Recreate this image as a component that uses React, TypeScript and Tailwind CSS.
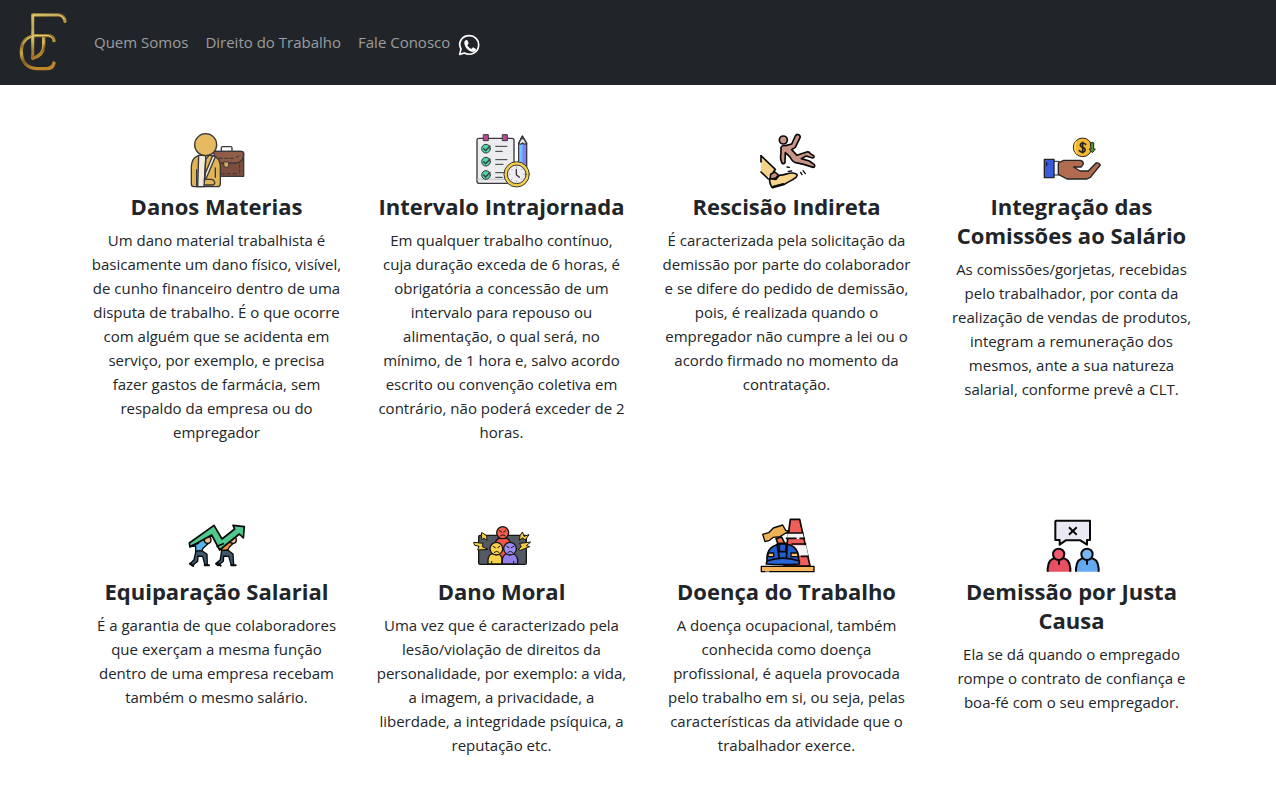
import type { ReactNode } from "react";

type Topic = { title: string; text: string; icon: ReactNode };

function Icon({ viewBox, children }: { viewBox: string; children: ReactNode }) {
  return (
    <svg
      viewBox={viewBox}
      className="size-16"
      fill="none"
      strokeLinecap="round"
      strokeLinejoin="round"
      aria-hidden="true"
    >
      {children}
    </svg>
  );
}

function InjuryIcon() {
  return (
    <Icon viewBox="10 5 192 192">
      <g stroke="#38383b" strokeWidth="4">
        <path d="M119 75V65q0-4 4-4h24q4 0 4 4v10" />
        <path d="M95 75h83q8 0 8 8v67H105V75z" fill="#7d4e3d" />
        <path d="M95 75h83q8 0 8 8c0 16-8 25-22 27h-60z" fill="#915d49" />
        <path d="M127 107h14v12q0 4-7 4t-7-4z" fill="#d9ac55" strokeWidth="3" />
        <path d="M112 96h10m6 0h10m6 0h12m8-3l8-4M118 142h10m8 0h10m8 0h10m10-3v-10m0-6v-8" strokeWidth="3" />
        <path d="M60 87c-22 0-31 16-31 38v48q0 8 8 8h70q9 0 9-9v-48c0-23-10-37-32-37z" fill="#dfb557" />
        <path d="M60 87h-9l-3 94h19l5-82 10-12z" fill="#f1eadf" />
        <path d="M93 88l8 4-26 61-7 10 3-22z" fill="#f1eadf" />
        <path d="M45 130v51M101 125v28M70 159h20q10 3 9 13l-5 4H68M72 88v15l-3 56" />
        <circle cx="72" cy="55" r="33" fill="#e5ba60" />
      </g>
    </Icon>
  );
}

function ScheduleIcon() {
  return (
    <Icon viewBox="10 6 192 192">
      <g stroke="#37373d" strokeWidth="4">
        <rect x="31" y="37" width="111" height="135" rx="6" fill="#ededf0" />
        <path d="M34 160h105" stroke="#cfcfd6" strokeWidth="5" />
        <path d="M51 26h14v18H51zM108 26h14v18h-14z" fill="#bd4795" strokeWidth="3" />
        <path d="M87 61h34M87 76h20m-20 25h34m-34 14h22m-22 25h24m-24 14h20" strokeWidth="3" />
        <g fill="#50d6a6" strokeWidth="3">
          <circle cx="58" cy="68" r="13" />
          <circle cx="58" cy="107" r="13" />
          <circle cx="58" cy="147" r="13" />
        </g>
        <path d="M51 68l6 6 13-14m-19 47l6 6 13-14m-19 48l6 6 13-14" />
        <path d="M156 52l11-22 13 22v90h-24z" fill="#8380ff" />
        <path d="M158 54h9v82h-9z" fill="#68c7fb" stroke="none" />
        <path d="M156 52l11-21 13 21q-6 5-12-1-6 6-12 1z" fill="#eeeae7" />
        <path d="M163 38l4-8 5 8z" fill="#37373d" strokeWidth="2" />
        <circle cx="150" cy="145" r="38" fill="#f4cf45" strokeWidth="3" />
        <circle cx="150" cy="145" r="28" fill="#eeeef2" strokeWidth="3" />
        <path d="M149 130v16l9 8" />
        <path d="M150 122v3m0 40v3m-23-23h3m40 0h3m-39-16l2 2m28 28l2 2m0-32l-2 2m-28 28l-2 2" strokeWidth="2" stroke="#85858a" />
      </g>
    </Icon>
  );
}

function KickIcon() {
  return (
    <Icon viewBox="13 6 192 192">
      <g stroke="#090909" strokeWidth="5">
        <circle cx="98" cy="42" r="12" fill="#c99586" />
        <path d="M91 64q4-7 14-5l18-5 11-24q4-7 10-4t4 9l-14 29-11 7 16 17 29-10q9-1 10 4l11 7q3 5-3 7l-20-6-14 8 24 7 15 11q3 6-3 8l-29-9-27-6q-6-2-15-17l-13-12-1 29q-3 7-9 2c-6-11-5-20-3-31z" fill="#c99586" />
        <path d="M31 89l43 41-24 26-19-18z" fill="#f5d489" stroke="none" />
        <path d="M31 89l43 41-6 8M31 138l22 21M31 90v18" />
        <path d="M60 145l13-7 10 9-7 9-18 4z" fill="#c88f7b" />
        <path d="M57 158l19 2 11-13c14 2 22-7 40-6 13 1 15 7 9 13-12 10-23 13-35 21l-36 10c-7-9-9-17-8-27z" fill="#f5d489" />
        <path d="M98 173l-31 8M109 123l7 1m-3 12l10-1M150 139l4 7m3-12l7 9" strokeWidth="4" />
      </g>
    </Icon>
  );
}

function CommissionIcon() {
  return (
    <Icon viewBox="11 6 192 192">
      <g stroke="#242424" strokeWidth="4">
        <circle cx="139" cy="64" r="28" fill="#f7b82d" strokeWidth="3" />
        <path d="M119 48q-9 19 3 34" stroke="#ffdb67" strokeWidth="4" />
        <path d="M163 50h9v19h5l-9 11-10-11h5z" fill="#509b34" strokeWidth="3" />
        <path d="M52 106h17v41H52z" fill="#f4f4fc" strokeWidth="3" />
        <path d="M66 111l16-8h51q9 3 8 11l-6 9h-23l19 12h25l23-24q10-2 13 6l-30 37-10 5H92l-26-14z" fill="#b16b4f" />
        <path d="M24 100h29v55H24z" fill="#395bdb" />
        <path d="M31 110v9" stroke="#101e5e" />
        <path d="M148 55q-6-6-13-3-6 5 0 10l8 4q7 6 0 11-8 4-14-3m10-25v31" strokeWidth="5" />
      </g>
    </Icon>
  );
}

function GrowthIcon() {
  return (
    <Icon viewBox="9 6 192 192">
      <g stroke="#090909" strokeWidth="4">
        <path d="M51 87l-28 19 18-1v17q6 7 16 1l6-11 15-14-4-12z" fill="#57b6ed" />
        <path d="M111 92l-6 15 14-2v13q6 7 17 1l6-11 13-12-4-12z" fill="#f49437" />
        <path d="M42 120l18-1 15 11 1 31-7 2-7-27-14-1-1 16-16 13-7-6 12-12z" fill="#3c5970" />
        <path d="M119 118l18-1 16 12 2 32-7 2-8-27-15-1-1 16-16 13-7-6 14-12z" fill="#3c5970" />
        <path d="M24 158l10 7m34-2h13m26-6l9 7m32-1h13" strokeWidth="6" />
        <circle cx="77" cy="87" r="10" fill="#f0b991" />
        <circle cx="153" cy="87" r="10" fill="#f0b991" />
        <path d="M22 96l74-53 24 41 38-30-5-11 34 4-3 34-12-12-59 48-24-45-65 36z" fill="#4ec98b" strokeWidth="5" />
        <path d="M25 106l24-9m58 8l17-7" strokeWidth="5" />
      </g>
    </Icon>
  );
}

function MoralIcon() {
  return (
    <Icon viewBox="10 6 192 192">
      <g stroke="#161616" strokeWidth="4">
        <rect x="36" y="73" width="143" height="87" rx="4" fill="#545a63" />
        <path d="M85 97q4-16 19-16h11q13 0 17 16v62H85z" fill="#ef5746" />
        <circle cx="108" cy="65" r="18" fill="#f15e4b" />
        <path d="M64 159v-13q2-18 17-18h7q17 0 18 18v13z" fill="#f8d149" />
        <path d="M107 159v-13q3-18 17-18h9q17 0 20 18v13z" fill="#9381e9" />
        <circle cx="89" cy="113" r="19" fill="#f8d149" />
        <circle cx="130" cy="113" r="19" fill="#9d8cf3" />
        <path d="M98 59l7 4m12-4l-6 4m-9 11q6-6 13 0M79 106l7 4m13-4l-6 4m-10 14q7-7 14 0M120 106l7 4m14-4l-7 4m-10 14q7-7 14 0M75 151v8m31-10v10m35-8v8" strokeWidth="3" />
        <path d="M46 65l14 9 1 14-9-6-5 4-3-10zM22 94l27 3-2 10 17 8-31 2 4-11-12-3zM168 64l4 12 15-5-11 16-8-6-10 7 2-14zM191 94l-12 10 10 3-27 11-8-2 10-9-5-9z" fill="#f9cc3e" strokeWidth="3" />
      </g>
    </Icon>
  );
}

function SafetyIcon() {
  return (
    <Icon viewBox="9 6 192 192">
      <g stroke="#080808" strokeWidth="5">
        <path d="M115 25h28l31 140H96z" fill="#ef5e59" />
        <path d="M107 66h45l4 18h-51zM108 103h54l7 31h-61z" fill="#f6f4f5" stroke="none" />
        <path d="M104 66h48M103 82h29m12 0h13M120 99h41M148 136h20" />
        <path d="M72 83l17-5 15 31-17 11z" fill="#ef7947" />
        <path d="M32 70l18-5 14-14 28-9 9 16 10 2-27 17-20 2-11 9-14 4z" fill="#efb156" strokeWidth="4" />
        <path d="M45 149q-3-42 37-50h21q39 7 37 50l-46 4z" fill="#235dcc" />
        <path d="M75 99l7 44m24-44l-3 44M82 97h20v25H82z" />
        <path d="M49 126h16v11H48zm68 0h20l1 11h-21z" fill="#ffc466" strokeWidth="4" />
        <path d="M45 150q47-17 97 0v9q-49 4-99 0z" fill="#2865d5" />
        <rect x="28" y="166" width="158" height="16" fill="#f7b45d" strokeWidth="4" />
        <path d="M41 183h10" stroke="#fff" strokeWidth="3" />
      </g>
    </Icon>
  );
}

function DismissalIcon() {
  return (
    <Icon viewBox="11 6 192 192">
      <g stroke="#080808" strokeWidth="6">
        <path d="M59 29h102v58h-9v14l-20-13H88l-18 13V87H57V31z" fill="#e9e8f4" />
        <path d="M100 51l19 18m0-18l-19 18" strokeLinecap="square" />
        <path d="M34 182v-10q2-31 28-31h12q26 0 28 31v10" fill="#e94f62" strokeLinecap="butt" />
        <path d="M119 182v-10q2-31 28-31h12q26 0 28 31v10" fill="#64a9f1" strokeLinecap="butt" />
        <circle cx="67" cy="130" r="17" fill="#f05a6d" />
        <circle cx="152" cy="130" r="17" fill="#77b5f5" />
        <path d="M68 147v12m84-12v12" />
      </g>
    </Icon>
  );
}

const topics: Topic[] = [
  {
    title: "Danos Materias",
    text: "Um dano material trabalhista é\nbasicamente um dano físico, visível,\nde cunho financeiro dentro de uma\ndisputa de trabalho. É o que ocorre\ncom alguém que se acidenta em\nserviço, por exemplo, e precisa\nfazer gastos de farmácia, sem\nrespaldo da empresa ou do\nempregador",
    icon: <InjuryIcon />,
  },
  {
    title: "Intervalo Intrajornada",
    text: "Em qualquer trabalho contínuo,\ncuja duração exceda de 6 horas, é\nobrigatória a concessão de um\nintervalo para repouso ou\nalimentação, o qual será, no\nmínimo, de 1 hora e, salvo acordo\nescrito ou convenção coletiva em\ncontrário, não poderá exceder de 2\nhoras.",
    icon: <ScheduleIcon />,
  },
  {
    title: "Rescisão Indireta",
    text: "É caracterizada pela solicitação da\ndemissão por parte do colaborador\ne se difere do pedido de demissão,\npois, é realizada quando o\nempregador não cumpre a lei ou o\nacordo firmado no momento da\ncontratação.",
    icon: <KickIcon />,
  },
  {
    title: "Integração das\nComissões ao Salário",
    text: "As comissões/gorjetas, recebidas\npelo trabalhador, por conta da\nrealização de vendas de produtos,\nintegram a remuneração dos\nmesmos, ante a sua natureza\nsalarial, conforme prevê a CLT.",
    icon: <CommissionIcon />,
  },
  {
    title: "Equiparação Salarial",
    text: "É a garantia de que colaboradores\nque exerçam a mesma função\ndentro de uma empresa recebam\ntambém o mesmo salário.",
    icon: <GrowthIcon />,
  },
  {
    title: "Dano Moral",
    text: "Uma vez que é caracterizado pela\nlesão/violação de direitos da\npersonalidade, por exemplo: a vida,\na imagem, a privacidade, a\nliberdade, a integridade psíquica, a\nreputação etc.",
    icon: <MoralIcon />,
  },
  {
    title: "Doença do Trabalho",
    text: "A doença ocupacional, também\nconhecida como doença\nprofissional, é aquela provocada\npelo trabalho em si, ou seja, pelas\ncaracterísticas da atividade que o\ntrabalhador exerce.",
    icon: <SafetyIcon />,
  },
  {
    title: "Demissão por Justa\nCausa",
    text: "Ela se dá quando o empregado\nrompe o contrato de confiança e\nboa-fé com o seu empregador.",
    icon: <DismissalIcon />,
  },
];

function Logo() {
  return (
    <svg viewBox="0 0 156 192" className="h-16 w-[52px]" fill="none" strokeLinecap="round" strokeLinejoin="round" aria-hidden="true">
      <defs>
        <linearGradient id="gold" x1="0" y1="0" x2="0.3" y2="1">
          <stop offset="0" stopColor="#b8983c" />
          <stop offset="0.25" stopColor="#8d6b28" />
          <stop offset="0.5" stopColor="#c9ab49" />
          <stop offset="0.75" stopColor="#7b5c1f" />
          <stop offset="1" stopColor="#bf852a" />
        </linearGradient>
        <linearGradient id="shine" x1="0" y1="0" x2="0" y2="1">
          <stop offset="0" stopColor="#f2e99c" />
          <stop offset="0.6" stopColor="#e8dc85" />
          <stop offset="1" stopColor="#b08a3b" />
        </linearGradient>
      </defs>
      <g stroke="url(#gold)" strokeWidth="10">
        <path d="M53 142V12h78q17 2 19 19" />
        <path d="M117 89q-2-14-16-15H60C32 78 19 96 19 122c0 31 18 50 46 51h30q18 0 22-17" />
        <path d="M86 78v27q-1 28-31 36" />
      </g>
      <g stroke="url(#shine)" strokeWidth="3">
        <path d="M54 132V12h77q14 2 17 13M111 80q-5-5-12-6H60q-25 5-36 25M84 80v23q-1 22-20 31" />
      </g>
    </svg>
  );
}

function WhatsAppIcon() {
  return (
    <svg viewBox="0 0 66 66" className="size-[22px]" fill="none" aria-hidden="true">
      <path d="M5 61l4-16C-2 24 13 5 34 5c16 0 28 12 28 27 0 23-24 35-43 25z" stroke="#fff" strokeWidth="5" strokeLinejoin="round" />
      <path d="M19 26c0-6 6-10 9-7l4 9-4 6c3 6 7 9 12 11l5-5 9 5c1 6-7 10-13 8-11-2-22-16-22-27z" fill="#fff" />
    </svg>
  );
}

export default function App() {
  return (
    <div className="min-h-screen bg-white font-['Open_Sans',sans-serif] text-[#212529]">
      <nav className="flex h-[85px] items-center bg-[#212529] pl-[15px] text-[15px] text-[#9b9d9e]">
        <a href="#inicio" aria-label="Início" className="mr-[27px] block">
          <Logo />
        </a>
        <div className="flex items-center gap-[17px]">
          <a href="#quem-somos">Quem Somos</a>
          <a href="#direito">Direito do Trabalho</a>
          <a href="#contato" className="flex items-center gap-2">
            Fale Conosco
            <span className="pt-1"><WhatsAppIcon /></span>
          </a>
        </div>
      </nav>
      <main className="mx-auto grid max-w-[1152px] grid-cols-1 gap-y-[69px] pt-[43px] pb-[30px] pl-3 sm:grid-cols-2 lg:grid-cols-4">
        {topics.map((topic) => (
          <section key={topic.title} className="flex flex-col items-center px-2 text-center">
            {topic.icon}
            <h2 className="mb-[7px] text-[22px] leading-[29px] font-bold whitespace-pre-line">{topic.title}</h2>
            <p className="text-[15px] leading-6 whitespace-pre-line">{topic.text}</p>
          </section>
        ))}
      </main>
    </div>
  );
}
